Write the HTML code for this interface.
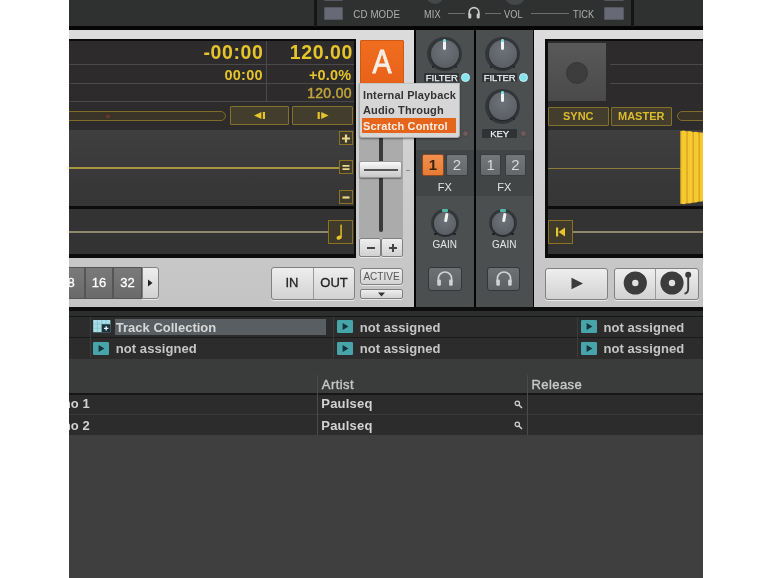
<!DOCTYPE html>
<html>
<head>
<meta charset="utf-8">
<title>Traktor Scratch Control</title>
<style>
*{box-sizing:border-box;margin:0;padding:0}
html,body{width:770px;height:578px;background:#fff;overflow:hidden}
body{font-family:"Liberation Sans",sans-serif;position:relative}
#app{position:absolute;left:69px;top:-6px;width:634px;height:590px;background:linear-gradient(#2f3131 0,#2f3131 20px,#3f3f3f 20px);overflow:hidden;filter:blur(.7px)}
#in{left:0;top:6px;width:634px;height:584px}
#app div,#app span,#app svg{position:absolute}
/* coordinates inside #app are page x - 69 */
.topbar{left:0;top:0;width:634px;height:26px;background:#2f3131}
.blk{background:#050505}
.tlabel{color:#aeb0b0;font-size:9.2px;line-height:12px;top:8.6px;transform:scaleY(1.16);transform-origin:50% 80%;letter-spacing:0.1px;white-space:nowrap}
.chk{background:#676a76;border:1px solid #55575f;border-radius:1px}
.panel{background:linear-gradient(#dcdcdc,#d2d3d2 30%,#c3c4c3);}
.disp{background:#0c0c0c}
.hdr{background:#2d2b2b}
.hl{height:1px;background:#4c4a48}
.ytxt{color:#e6c42c;font-weight:bold;white-space:nowrap;text-align:right}
.ybtn{border:1px solid #84722a;background:#423d2c;border-radius:1px}
.wave{background:linear-gradient(#403f40,#363536)}
.yline{height:1.5px;background:#a89140}
.sq{border:1px solid #8a7424;background:#3f3a2a}
.lbtn{background:linear-gradient(#eeeeee,#d2d2d2);border:1px solid #818181;border-radius:3px;box-shadow:0 1px 0 rgba(255,255,255,.6)}
.gbtn{background:linear-gradient(#7a7a7a,#6a6a6a);border:1px solid #555;color:#fff;font-size:13px;-webkit-text-stroke:.3px #fff;text-align:center;line-height:30px}
.mix{background:#4b4f50}
.fxband{background:#414546}
.mlabel{color:#e4e6e6;font-size:11px;line-height:12px;text-align:center;white-space:nowrap}
.ml2{font-size:9.5px;color:#f0f2f2;-webkit-text-stroke:.25px #f0f2f2}
.lblbox{background:#2f3336;border-radius:1px}
.fxb{border-radius:2px;background:linear-gradient(#74777a,#65686b);border:1px solid #3a3d3f;color:#d8dada;font-size:15px;line-height:20px;text-align:center}
.fxb.on{background:linear-gradient(#f0914e,#e87a34);color:#3a2410;border-color:#8a4a1e;font-weight:bold}
.hpb{border-radius:3px;background:linear-gradient(#6e7174,#5e6164);border:1px solid #34373a}
.pm{font-size:11px;line-height:14px;font-weight:bold;color:#333;white-space:nowrap;letter-spacing:.15px}
.dot{width:8.6px;height:8.6px;border-radius:50%;background:#6b5b5b;border:1px solid #4a4242;width:7px;height:7px}
.dot.on{width:9px;height:9px;background:#86e2ec;border:1.5px solid #c4f2f6}
.row{background:#2c2c2c}
.btxt{color:#c6c6c6;font-size:13px;font-weight:bold;line-height:16px;white-space:nowrap;letter-spacing:.06px}
.htxt{font-weight:normal;-webkit-text-stroke:.4px currentColor;letter-spacing:.45px}
.ico{background:#48a3a6;border-radius:1px}
</style>
</head>
<body>
<div id="app"><div id="in">
  <!-- top bar -->
  <div class="topbar"></div>
  <div class="blk" style="left:0;top:26px;width:634px;height:4px"></div>
  <div class="blk" style="left:245px;top:0;width:3px;height:27px;background:#141515"></div>
  <div class="blk" style="left:562px;top:0;width:3px;height:27px;background:#141515"></div>
  <div class="chk" style="left:255px;top:7px;width:19px;height:13px"></div>
  <div class="chk" style="left:255px;top:-12px;width:19px;height:13px"></div>
  <span class="tlabel" style="left:284.3px;font-size:9.75px">CD MODE</span>
  <span class="tlabel" style="left:355px">MIX</span>
  <div style="left:379px;top:13px;width:17px;height:1px;background:#6c6e6e"></div>
  <svg style="left:398px;top:6px" width="14" height="14" viewBox="0 0 14 14"><path d="M2.2 9 V6.5 A4.8 4.8 0 0 1 11.8 6.5 V9" fill="none" stroke="#c8caca" stroke-width="1.7"/><rect x="1.3" y="7.6" width="3" height="5" rx="1" fill="#c8caca"/><rect x="9.7" y="7.6" width="3" height="5" rx="1" fill="#c8caca"/></svg>
  <div style="left:416px;top:13px;width:16px;height:1px;background:#6c6e6e"></div>
  <span class="tlabel" style="left:435px">VOL</span>
  <div style="left:462px;top:13px;width:38px;height:1px;background:#6c6e6e"></div>
  <span class="tlabel" style="left:504px">TICK</span>
  <div class="chk" style="left:535px;top:7px;width:20px;height:13px"></div>
  <div class="chk" style="left:535px;top:-12px;width:20px;height:13px"></div>
  <div style="left:357px;top:-14px;width:18px;height:18px;border-radius:50%;background:#45484b"></div>
  <div style="left:435px;top:-17px;width:22px;height:22px;border-radius:50%;background:#45484b"></div>

  <!-- deck A panel -->
  <div class="panel" id="deckA" style="left:0;top:30px;width:345px;height:277px"></div>

  <!-- deck A display -->
  <div class="disp" style="left:-3px;top:39px;width:290px;height:219px"></div>
  <div class="hdr" style="left:0;top:41px;width:285px;height:89px"></div>
  <div class="hl" style="left:0;top:64px;width:285px"></div>
  <div class="hl" style="left:0;top:83px;width:285px"></div>
  <div class="hl" style="left:0;top:101px;width:285px"></div>
  <div style="left:197px;top:41px;width:1px;height:60px;background:#4c4a48"></div>
  <span class="ytxt" style="right:439.6px;top:42px;font-size:19.5px;line-height:20px;letter-spacing:.6px">-00:00</span>
  <span class="ytxt" style="right:350px;top:42px;font-size:19.5px;line-height:20px;letter-spacing:.6px">120.00</span>
  <span class="ytxt" style="right:440.2px;top:67px;font-size:14.5px;line-height:16px;letter-spacing:.25px">00:00</span>
  <span class="ytxt" style="right:351.6px;top:67px;font-size:14.5px;line-height:16px;letter-spacing:.2px">+0.0%</span>
  <span class="ytxt" style="right:351.2px;top:84.6px;font-size:14px;line-height:16px;font-weight:normal;color:#bfa43a;-webkit-text-stroke:.5px #bfa43a;letter-spacing:.3px">120.00</span>
  <!-- stripe progress -->
  <div style="left:-10px;top:111px;width:167px;height:10px;border:1.5px solid #7f6c26;border-radius:5px;background:#3a3428"></div>
  <div style="left:37px;top:114.5px;width:4px;height:3px;background:#6e3629;border-radius:1px"></div>
  <div class="ybtn" style="left:161px;top:106px;width:59px;height:19px"></div>
  <div class="ybtn" style="left:223px;top:106px;width:61px;height:19px"></div>
  <svg style="left:182px;top:110px" width="18" height="11" viewBox="0 0 18 11"><path d="M3 5.5 L10.4 2 V9 Z" fill="#e6c42c"/><rect x="11.8" y="2" width="2.2" height="7" fill="#e6c42c"/></svg>
  <svg style="left:245px;top:110px" width="18" height="11" viewBox="0 0 18 11"><rect x="3.6" y="2" width="2.2" height="7" fill="#e6c42c"/><path d="M14.6 5.5 L7.2 2 V9 Z" fill="#e6c42c"/></svg>
  <!-- waveform -->
  <div class="wave" style="left:0;top:130px;width:285px;height:76px"></div>
  <div class="yline" style="left:0;top:167.3px;width:272px"></div>
  <div class="sq" style="left:269.5px;top:131px;width:14.5px;height:14px"></div>
  <div class="sq" style="left:269.5px;top:160.3px;width:14.5px;height:14px"></div>
  <div class="sq" style="left:269.5px;top:190px;width:14.5px;height:14px"></div>
  <svg style="left:269.8px;top:131.5px" width="14" height="13" viewBox="0 0 14 13"><path d="M3 6.5H11M7 2.5V10.5" stroke="#ead78a" stroke-width="2.2"/></svg>
  <svg style="left:269.8px;top:160.8px" width="14" height="13" viewBox="0 0 14 13"><path d="M3.5 4.8H10.5M3.5 8.2H10.5" stroke="#ead78a" stroke-width="1.7"/></svg>
  <svg style="left:269.8px;top:190.5px" width="14" height="13" viewBox="0 0 14 13"><path d="M3.5 6.5H10.5" stroke="#ead78a" stroke-width="2.2"/></svg>
  <div class="hdr" style="left:0;top:209px;width:285px;height:45px;background:#343333"></div>
  <div class="yline" style="left:0;top:231px;width:260px;background:#8e8870"></div>
  <div class="sq" style="left:259px;top:220px;width:25px;height:24px"></div>
  <svg style="left:259px;top:220px" width="25" height="24" viewBox="0 0 25 24"><ellipse cx="11" cy="17.6" rx="2.6" ry="2" fill="#e6c42c" transform="rotate(-20 11 17.6)"/><rect x="12.4" y="4.6" width="1.4" height="13" fill="#e6c42c"/></svg>

  <!-- deck A controls -->
  <div style="left:290.5px;top:40px;width:44px;height:46px;background:linear-gradient(#f06e1e,#e8621a);border:1px solid #cc5a16;border-radius:1px"></div>
  <span style="left:290.5px;top:43px;width:44px;text-align:center;font-size:34px;line-height:36px;color:#f6eee6;-webkit-text-stroke:.9px #f6eee6;transform:scaleX(.84)">A</span>
  <div style="left:290px;top:86px;width:44px;height:152px;background:#ababab"></div>
  <div style="left:310px;top:86px;width:4px;height:146px;background:#3a3a3a;border-radius:2px"></div>
  <div style="left:290.3px;top:161.3px;width:42.6px;height:17px;border-radius:2px;background:linear-gradient(#fafafa,#e4e4e4 40%,#c8c8c8);border:1px solid #9a9a9a;box-shadow:0 1px 1px rgba(0,0,0,.35)"></div>
  <div style="left:295px;top:168.8px;width:34px;height:2px;background:#555"></div>
  <div style="left:337px;top:170px;width:4px;height:1px;background:#888"></div>
  <div class="lbtn" style="left:290px;top:238px;width:22px;height:19px;border-radius:2px"></div>
  <div class="lbtn" style="left:312.3px;top:238px;width:22px;height:19px;border-radius:2px"></div>
  <div style="left:297.5px;top:247px;width:8px;height:2px;background:#444"></div>
  <div style="left:319.5px;top:247px;width:8px;height:2px;background:#444"></div>
  <div style="left:322.5px;top:244px;width:2px;height:8px;background:#444"></div>
  <!-- loop size -->
  <div class="gbtn" style="left:-12px;top:267px;width:28px;height:32px">8</div>
  <div class="gbtn" style="left:16px;top:267px;width:28px;height:32px">16</div>
  <div class="gbtn" style="left:44px;top:267px;width:29px;height:32px">32</div>
  <div class="lbtn" style="left:73px;top:267px;width:16.5px;height:32px;border-radius:0 3px 3px 0"></div>
  <svg style="left:77px;top:278px" width="8" height="10" viewBox="0 0 8 10"><path d="M2 1.5 L6.5 5 L2 8.5Z" fill="#222"/></svg>
  <!-- in/out -->
  <div class="lbtn" style="left:202px;top:267px;width:84px;height:32.5px"></div>
  <div style="left:243.5px;top:268px;width:1px;height:30.5px;background:#9a9a9a"></div>
  <span style="left:202px;top:275px;width:42px;text-align:center;font-size:13px;line-height:16px;color:#222;-webkit-text-stroke:.3px #222">IN</span>
  <span style="left:244px;top:275px;width:42px;text-align:center;font-size:13px;line-height:16px;color:#222;-webkit-text-stroke:.3px #222">OUT</span>
  <!-- active -->
  <div class="lbtn" style="left:291px;top:267.5px;width:43px;height:17.5px"></div>
  <span style="left:291px;top:270.5px;width:43px;text-align:center;font-size:10px;line-height:12px;color:#555">ACTIVE</span>
  <div class="lbtn" style="left:291px;top:289px;width:43px;height:10px;border-radius:2px"></div>
  <svg style="left:308px;top:292px" width="9" height="5" viewBox="0 0 9 5"><path d="M1 .5H8L4.5 4.5Z" fill="#333"/></svg>
  <!-- mixer -->
  <div class="blk" style="left:345px;top:30px;width:120px;height:277px"></div>
  <div class="mix" style="left:347px;top:30px;width:57.5px;height:277px"></div>
  <div class="mix" style="left:407px;top:30px;width:56.5px;height:277px"></div>
  <div class="fxband" style="left:347px;top:150px;width:57.5px;height:46px"></div>
  <div class="fxband" style="left:407px;top:150px;width:56.5px;height:46px"></div>
  <div style="left:358.3px;top:36.6px;width:34.8px;height:34.8px;border-radius:50%;background:radial-gradient(circle,#33373a 80%,#3d4143 92%,#474b4d 100%)"></div><div style="left:361.5px;top:39.8px;width:28.4px;height:28.4px;border-radius:50%;background:radial-gradient(circle at 50% 35%,#6e7379,#5d6167 70%,#50545a);box-shadow:0 1px 2px rgba(0,0,0,.45)"></div>
  <div style="left:374.2px;top:38.7px;width:3px;height:11.5px;border-radius:1.4px;background:linear-gradient(#7fe0e6 0,#7fe0e6 24%,#f2f4f4 32%)"></div>
  <div style="left:363.1px;top:65.6px;width:2.2px;height:2.2px;border-radius:50%;background:#1e2022"></div><div style="left:386.1px;top:65.6px;width:2.2px;height:2.2px;border-radius:50%;background:#1e2022"></div>
  <div style="left:416.3px;top:36.6px;width:34.8px;height:34.8px;border-radius:50%;background:radial-gradient(circle,#33373a 80%,#3d4143 92%,#474b4d 100%)"></div><div style="left:419.5px;top:39.8px;width:28.4px;height:28.4px;border-radius:50%;background:radial-gradient(circle at 50% 35%,#6e7379,#5d6167 70%,#50545a);box-shadow:0 1px 2px rgba(0,0,0,.45)"></div>
  <div style="left:432.2px;top:38.7px;width:3px;height:11.5px;border-radius:1.4px;background:linear-gradient(#7fe0e6 0,#7fe0e6 24%,#f2f4f4 32%)"></div>
  <div style="left:421.1px;top:65.6px;width:2.2px;height:2.2px;border-radius:50%;background:#1e2022"></div><div style="left:444.1px;top:65.6px;width:2.2px;height:2.2px;border-radius:50%;background:#1e2022"></div>
  <div style="left:416.3px;top:88.8px;width:34.8px;height:34.8px;border-radius:50%;background:radial-gradient(circle,#33373a 80%,#3d4143 92%,#474b4d 100%)"></div><div style="left:419.5px;top:92.0px;width:28.4px;height:28.4px;border-radius:50%;background:radial-gradient(circle at 50% 35%,#6e7379,#5d6167 70%,#50545a);box-shadow:0 1px 2px rgba(0,0,0,.45)"></div>
  <div style="left:432.2px;top:90.9px;width:3px;height:11.5px;border-radius:1.4px;background:linear-gradient(#7fe0e6 0,#7fe0e6 24%,#f2f4f4 32%)"></div>
  <div style="left:421.1px;top:117.8px;width:2.2px;height:2.2px;border-radius:50%;background:#1e2022"></div><div style="left:444.1px;top:117.8px;width:2.2px;height:2.2px;border-radius:50%;background:#1e2022"></div>
  <div class="lblbox" style="left:354.8px;top:73.2px;width:35.6px;height:9.2px"></div>
  <div class="lblbox" style="left:412.9px;top:73.2px;width:35.6px;height:9.2px"></div>
  <div class="lblbox" style="left:354.8px;top:129px;width:35.6px;height:9.2px"></div>
  <div class="lblbox" style="left:412.9px;top:129px;width:35.6px;height:9.2px"></div>
  <span class="mlabel ml2" style="left:354.8px;top:71.8px;width:36px">FILTER</span>
  <span class="mlabel ml2" style="left:412.9px;top:71.8px;width:35.5px">FILTER</span>
  <span class="mlabel ml2" style="left:354.8px;top:127.6px;width:36px">KEY</span>
  <span class="mlabel ml2" style="left:412.9px;top:127.6px;width:35.5px">KEY</span>
  <div class="dot on" style="left:391.6px;top:73.3px"></div>
  <div class="dot on" style="left:449.6px;top:73.3px"></div>
  <div class="dot" style="left:392.5px;top:129.8px"></div>
  <div class="dot" style="left:451.3px;top:129.8px"></div>
  <div class="fxb on" style="left:353.4px;top:154.3px;width:21.2px;height:22.2px">1</div>
  <div class="fxb" style="left:377.4px;top:154.3px;width:21.2px;height:22.2px">2</div>
  <div class="fxb" style="left:411.2px;top:154.3px;width:21.2px;height:22.2px">1</div>
  <div class="fxb" style="left:435.8px;top:154.3px;width:21.2px;height:22.2px">2</div>
  <span class="mlabel" style="left:347px;top:180.6px;width:57.5px">FX</span>
  <span class="mlabel" style="left:407px;top:180.6px;width:56.5px">FX</span>
  <div style="left:362.0px;top:209.4px;width:28.0px;height:28.0px;border-radius:50%;background:radial-gradient(circle,#33373a 80%,#3d4143 92%,#474b4d 100%)"></div><div style="left:364.6px;top:212.0px;width:22.8px;height:22.8px;border-radius:50%;background:radial-gradient(circle at 50% 35%,#6e7379,#5d6167 70%,#50545a);box-shadow:0 1px 2px rgba(0,0,0,.45)"></div>
  <div style="left:373.0px;top:209.4px;width:6px;height:2.4px;border-radius:1px;background:#4fb8a8"></div>
  <div style="left:375.4px;top:212.5px;width:2.6px;height:9px;border-radius:1.3px;background:#f2f4f4;transform:rotate(10deg);transform-origin:50% 100%"></div>
  <div style="left:365.4px;top:233.2px;width:2.2px;height:2.2px;border-radius:50%;background:#1c1c1c"></div><div style="left:384.4px;top:233.2px;width:2.2px;height:2.2px;border-radius:50%;background:#1c1c1c"></div>
  <div style="left:420.0px;top:209.4px;width:28.0px;height:28.0px;border-radius:50%;background:radial-gradient(circle,#33373a 80%,#3d4143 92%,#474b4d 100%)"></div><div style="left:422.6px;top:212.0px;width:22.8px;height:22.8px;border-radius:50%;background:radial-gradient(circle at 50% 35%,#6e7379,#5d6167 70%,#50545a);box-shadow:0 1px 2px rgba(0,0,0,.45)"></div>
  <div style="left:431.0px;top:209.4px;width:6px;height:2.4px;border-radius:1px;background:#4fb8a8"></div>
  <div style="left:433.4px;top:212.5px;width:2.6px;height:9px;border-radius:1.3px;background:#f2f4f4;transform:rotate(10deg);transform-origin:50% 100%"></div>
  <div style="left:423.4px;top:233.2px;width:2.2px;height:2.2px;border-radius:50%;background:#1c1c1c"></div><div style="left:442.4px;top:233.2px;width:2.2px;height:2.2px;border-radius:50%;background:#1c1c1c"></div>
  <span class="mlabel" style="left:347px;top:238.5px;width:57.5px;font-size:10px">GAIN</span>
  <span class="mlabel" style="left:407px;top:238.5px;width:56.5px;font-size:10px">GAIN</span>
  <div class="hpb" style="left:359.3px;top:267px;width:33.3px;height:23.5px"></div>
  <svg style="left:366.0px;top:270.3px" width="20" height="17" viewBox="0 0 20 17"><path d="M3.4 12.5 V8.6 A6.6 6.6 0 0 1 16.6 8.6 V12.5" fill="none" stroke="#cfd1d2" stroke-width="1.7"/><rect x="2.3" y="9.6" width="3.6" height="6.2" rx="1.2" fill="#cfd1d2"/><rect x="14.1" y="9.6" width="3.6" height="6.2" rx="1.2" fill="#cfd1d2"/></svg>
  <div class="hpb" style="left:417.8px;top:267px;width:33.3px;height:23.5px"></div>
  <svg style="left:424.5px;top:270.3px" width="20" height="17" viewBox="0 0 20 17"><path d="M3.4 12.5 V8.6 A6.6 6.6 0 0 1 16.6 8.6 V12.5" fill="none" stroke="#cfd1d2" stroke-width="1.7"/><rect x="2.3" y="9.6" width="3.6" height="6.2" rx="1.2" fill="#cfd1d2"/><rect x="14.1" y="9.6" width="3.6" height="6.2" rx="1.2" fill="#cfd1d2"/></svg>
  <!-- deck B panel -->
  <div class="panel" id="deckB" style="left:465px;top:30px;width:169px;height:277px"></div>

  <!-- deck B display -->
  <div class="disp" style="left:475.7px;top:39px;width:170px;height:219px"></div>
  <div class="hdr" style="left:479px;top:41px;width:160px;height:89px"></div>
  <div style="left:479px;top:43.4px;width:57.5px;height:57.5px;background:linear-gradient(#5a5959,#4b4a4a)"></div>
  <div style="left:497px;top:61.5px;width:22px;height:22px;border-radius:50%;background:#3e3d3d;border:1px solid #383737"></div>
  <div class="hl" style="left:540.6px;top:64px;width:100px"></div>
  <div class="hl" style="left:540.6px;top:83px;width:100px"></div>
  <div class="ybtn" style="left:479px;top:106.5px;width:60.5px;height:19px"></div>
  <div class="ybtn" style="left:542px;top:106.5px;width:60.5px;height:19px"></div>
  <span class="ytxt" style="left:479px;top:109.5px;width:60.5px;text-align:center;font-size:11px;line-height:13px;color:#dcbc2e">SYNC</span>
  <span class="ytxt" style="left:542px;top:109.5px;width:60.5px;text-align:center;font-size:11px;line-height:13px;color:#dcbc2e">MASTER</span>
  <div style="left:607.6px;top:111px;width:60px;height:10px;border:1.5px solid #7f6c26;border-radius:5px;background:#3a3428"></div>
  <div class="wave" style="left:479px;top:130px;width:160px;height:76px"></div>
  <div class="yline" style="left:479px;top:167.5px;width:135px;height:1px;background:#8c7c3c"></div>
  <svg style="left:611px;top:129px" width="24" height="78" viewBox="0 0 24 78"><path d="M.6 2 L4 1.6 L6.8 2.4 L10 2.1 L13 3 L16 2.7 L19 3.6 L23 3.4 V72.4 L19 72.6 L16 73.6 L13 73.4 L10 74.4 L6.8 74.2 L4 75.2 L.6 74.8Z" fill="#f6c930"/><path d="M7 2.4V74.2M13.2 3V73.4M19.2 3.6V72.6" stroke="#d8a51e" stroke-width="1.4"/><path d="M1 2V74.8" stroke="#e0b024" stroke-width="1"/></svg>
  <div class="hdr" style="left:479px;top:209px;width:160px;height:45px;background:#343333"></div>
  <div class="yline" style="left:504px;top:231px;width:135px;background:#8e8870"></div>
  <div class="sq" style="left:479px;top:220px;width:25px;height:23.5px"></div>
  <svg style="left:479px;top:220px" width="25" height="24" viewBox="0 0 25 24"><rect x="8" y="7.5" width="2.2" height="9" fill="#e6c42c"/><path d="M10.6 12 L17 7.5 V16.5Z" fill="#e6c42c"/></svg>
  <!-- transport -->
  <div class="lbtn" style="left:475.7px;top:267.5px;width:63.6px;height:32px"></div>
  <svg style="left:500px;top:276px" width="16" height="15" viewBox="0 0 16 15"><path d="M2.5 1.8 L14 7.5 L2.5 13.2Z" fill="#3a3a3a"/></svg>
  <div class="lbtn" style="left:545px;top:267.5px;width:85px;height:32px"></div>
  <div style="left:586.3px;top:268.5px;width:1px;height:30px;background:#9a9a9a"></div>
  <svg style="left:553px;top:270px" width="26" height="26" viewBox="0 0 26 26"><circle cx="13.3" cy="13" r="7.4" fill="none" stroke="#3c3c3c" stroke-width="8.4"/></svg>
  <svg style="left:589px;top:270px" width="40" height="27" viewBox="0 0 40 27"><circle cx="14" cy="13" r="7.4" fill="none" stroke="#3c3c3c" stroke-width="8.4"/><circle cx="30.2" cy="4.7" r="3" fill="#3c3c3c"/><path d="M30.2 5 V18.5 Q30.2 23 26.5 23.6" fill="none" stroke="#3c3c3c" stroke-width="1.9"/></svg>
  <!-- browser -->
  <div class="blk" style="left:0;top:307px;width:634px;height:9px;background:#0e0e0e"></div>

  <div style="left:0;top:311px;width:634px;height:5.5px;background:#2c2d2d"></div>
  <div style="left:0;top:316px;width:634px;height:1px;background:#151515"></div>
  <div class="row" style="left:0;top:317px;width:634px;height:19.5px"></div>
  <div style="left:0;top:336.5px;width:634px;height:1px;background:#1a1a1a"></div>
  <div class="row" style="left:0;top:337.5px;width:634px;height:21px"></div>
  <div style="left:0;top:358.5px;width:634px;height:34px;background:#3a3b3b"></div>
  <div style="left:21px;top:317px;width:1px;height:41px;background:#3c3c3c"></div>
  <div style="left:264px;top:317px;width:1px;height:41px;background:#3c3c3c"></div>
  <div style="left:508px;top:317px;width:1px;height:41px;background:#3c3c3c"></div>
  <div style="left:46.4px;top:319.2px;width:211px;height:16px;background:#595e62"></div>
  <!-- icons -->
  <svg style="left:23.5px;top:320.3px" width="18" height="13" viewBox="0 0 19 14"><rect width="18.5" height="13.2" fill="#a9dfe6"/><path d="M0 4.4H18.5M0 8.8H9M4.6 0V13.2M9.2 0V13.2M13.8 0V4.4" stroke="#7fbfc8" stroke-width=".8"/><rect x="9.2" y="4.6" width="9.3" height="8.6" fill="#1f3038"/><path d="M11.6 9H16.4M14 6.6V11.4" stroke="#dff4f6" stroke-width="1.5"/></svg>
  <span class="btxt" style="left:46.8px;top:319.5px;color:#d6d8d8;letter-spacing:0">Track Collection</span>
  <svg style="left:24px;top:341.8px" width="16" height="13" viewBox="0 0 16 13"><rect width="16" height="13" rx="1.2" fill="#47a4a8"/><path d="M5.6 3 L11.4 6.5 L5.6 10Z" fill="#14323a"/></svg>
  <span class="btxt" style="left:46.8px;top:341px">not assigned</span>
  <svg style="left:268px;top:320.3px" width="16" height="13" viewBox="0 0 16 13"><rect width="16" height="13" rx="1.2" fill="#47a4a8"/><path d="M5.6 3 L11.4 6.5 L5.6 10Z" fill="#14323a"/></svg>
  <span class="btxt" style="left:290.7px;top:319.6px">not assigned</span>
  <svg style="left:268px;top:341.8px" width="16" height="13" viewBox="0 0 16 13"><rect width="16" height="13" rx="1.2" fill="#47a4a8"/><path d="M5.6 3 L11.4 6.5 L5.6 10Z" fill="#14323a"/></svg>
  <span class="btxt" style="left:290.7px;top:341px">not assigned</span>
  <svg style="left:511.6px;top:320.3px" width="16" height="13" viewBox="0 0 16 13"><rect width="16" height="13" rx="1.2" fill="#47a4a8"/><path d="M5.6 3 L11.4 6.5 L5.6 10Z" fill="#14323a"/></svg>
  <span class="btxt" style="left:534.4px;top:319.6px">not assigned</span>
  <svg style="left:511.6px;top:341.8px" width="16" height="13" viewBox="0 0 16 13"><rect width="16" height="13" rx="1.2" fill="#47a4a8"/><path d="M5.6 3 L11.4 6.5 L5.6 10Z" fill="#14323a"/></svg>
  <span class="btxt" style="left:534.4px;top:341px">not assigned</span>

  <!-- track list -->
  <div style="left:0;top:392.5px;width:634px;height:2px;background:#161616"></div>
  <div class="row" style="left:0;top:394.5px;width:634px;height:19px"></div>
  <div style="left:0;top:413.5px;width:634px;height:1px;background:#3a3a3a"></div>
  <div class="row" style="left:0;top:414.5px;width:634px;height:20.5px"></div>
  <div style="left:0;top:435px;width:634px;height:150px;background:#3f3f3f"></div>
  <div style="left:247.5px;top:375px;width:1px;height:60px;background:#4a4a4a"></div>
  <div style="left:457.5px;top:375px;width:1px;height:60px;background:#4a4a4a"></div>
  <span class="btxt htxt" style="left:252.8px;top:376.7px;color:#c8c8c8">Artist</span>
  <span class="btxt htxt" style="left:462.4px;top:376.7px;color:#c8c8c8">Release</span>
  <span class="btxt" style="left:-26.5px;top:396.1px;color:#d2d2d2">Demo 1</span>
  <span class="btxt" style="left:-26.5px;top:417.6px;color:#d2d2d2">Demo 2</span>
  <span class="btxt" style="left:252.3px;top:396.1px;color:#d2d2d2;letter-spacing:.2px">Paulseq</span>
  <span class="btxt" style="left:252.3px;top:417.6px;color:#d2d2d2;letter-spacing:.2px">Paulseq</span>
  <svg style="left:445px;top:399.5px" width="9" height="9" viewBox="0 0 9 9"><circle cx="3.3" cy="3.3" r="2.2" fill="none" stroke="#d0d0d0" stroke-width="1.3"/><path d="M5 5 L8 8" stroke="#d0d0d0" stroke-width="1.5"/></svg>
  <svg style="left:445px;top:421px" width="9" height="9" viewBox="0 0 9 9"><circle cx="3.3" cy="3.3" r="2.2" fill="none" stroke="#d0d0d0" stroke-width="1.3"/><path d="M5 5 L8 8" stroke="#d0d0d0" stroke-width="1.5"/></svg>
  <!-- popup menu -->
  <div style="left:289.8px;top:83.2px;width:101px;height:54.4px;background:#d6d6d6;border:1px solid #a9a9a9;border-top-color:#c4c4c4;border-radius:0 0 3px 3px;box-shadow:0 1px 2px rgba(0,0,0,.4)"></div>
  <div style="left:293.2px;top:118.4px;width:94.3px;height:15px;background:#e5651d"></div>
  <span class="pm" style="left:294px;top:88px">Internal Playback</span>
  <span class="pm" style="left:294px;top:103.2px">Audio Through</span>
  <span class="pm" style="left:294px;top:118.8px;color:#fbefe6">Scratch Control</span>
</div></div>
</body>
</html>
